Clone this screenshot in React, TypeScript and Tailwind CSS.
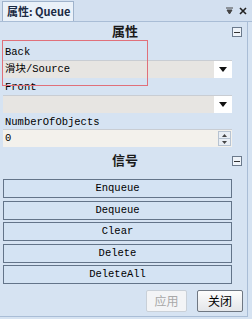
import React from 'react'

const mono = { fontFamily: '"Liberation Mono", "Noto Sans CJK SC", monospace' }
const cjk = { fontFamily: '"Noto Sans CJK SC", sans-serif' }

function SectionHeader({ title }: { title: string }) {
  return (
    <div className="relative flex h-[17px] items-center justify-center">
      <span className="text-[13px] font-bold leading-none text-[#1a1a1a]" style={cjk}>
        {title}
      </span>
      <span className="absolute right-[5px] top-[5px] flex h-[10px] w-[10px] items-center justify-center border border-[#6b7a8c] bg-[#eef3f9]">
        <span className="h-px w-[6px] bg-[#333]" />
      </span>
    </div>
  )
}

function Label({ text }: { text: string }) {
  return (
    <div className="mt-[2px] h-[14px] pl-[2px] text-[10.5px] leading-[14px] text-black" style={mono}>
      {text}
    </div>
  )
}

function Combo({ value }: { value?: string }) {
  return (
    <div className="flex h-[18px] w-[229px] border-t border-[#c9cdd3] bg-[#e7e5e2]">
      <div className="flex flex-1 items-center px-[2px] text-[10.5px] leading-none text-black" style={mono}>
        {value}
      </div>
      <div className="flex w-[18px] items-center justify-center bg-white">
        <svg width="8" height="5" viewBox="0 0 8 5"><path d="M0 0h8L4 5z" fill="#111" /></svg>
      </div>
    </div>
  )
}

function ActionButton({ label }: { label: string }) {
  return (
    <button
      className="flex h-[19px] w-[229px] items-center justify-center border border-[#637489] bg-[#d4e3f3] text-[10.5px] leading-none text-black"
      style={mono}
    >
      {label}
    </button>
  )
}

export default function App() {
  return (
    <div className="h-[319px] w-[252px] overflow-hidden bg-[#d6e3f2]">
      {/* tab strip */}
      <div className="flex h-[22px] items-end border-b border-[#a9bdd6] bg-[#d3e0f0]">
        <div
          className="ml-[2px] flex h-[20px] w-[72px] items-center border border-b-0 border-[#9fb3cc] bg-[#eaf1f9] pl-[4px] text-[11px] font-bold text-[#1b2a44]"
          style={cjk}
        >
          属性: Queue
        </div>
        <div className="flex-1" />
        <div className="mb-[6px] mr-[5px] flex items-center gap-[6px]">
          <svg width="7" height="8" viewBox="0 0 7 8"><path d="M0 1h7M1 3h5L3.5 7z" stroke="#444" strokeWidth="1" fill="#444" /></svg>
          <svg width="8" height="8" viewBox="0 0 8 8"><path d="M1 1l6 6M7 1L1 7" stroke="#222" strokeWidth="1.6" /></svg>
        </div>
      </div>

      <div className="mr-[4px] flex h-[295px] flex-col border-r border-b border-[#a9bdd6] pl-[3px]">
        <SectionHeader title="属性" />

        <div className="relative mt-[1px] flex flex-col pt-[3px]">
          <div className="pointer-events-none absolute -left-[1px] top-0 h-[46px] w-[146px] border border-[#e0707a]" />
          <Label text="Back" />
          <div className="mt-[1px]">
            <Combo value="滑块/Source" />
          </div>
          <Label text="Front" />
          <div className="mt-[1px]">
            <Combo />
          </div>
          <Label text="NumberOfObjects" />
          <div className="flex h-[18px] w-[229px] border-t border-[#c9cdd3] bg-[#f3f1ec]">
            <div className="flex flex-1 items-center px-[2px] text-[10.5px] leading-none text-black" style={mono}>0</div>
            <div className="my-[1px] mr-[1px] flex w-[13px] flex-col border border-[#b7c3d1] bg-[#e9eef4]">
              <div className="flex flex-1 items-center justify-center border-b border-[#b7c3d1]">
                <svg width="5" height="3" viewBox="0 0 5 3"><path d="M0 3h5L2.5 0z" fill="#444" /></svg>
              </div>
              <div className="flex flex-1 items-center justify-center">
                <svg width="5" height="3" viewBox="0 0 5 3"><path d="M0 0h5L2.5 3z" fill="#444" /></svg>
              </div>
            </div>
          </div>
        </div>

        <div className="mt-[4px]">
          <SectionHeader title="信号" />
        </div>

        <div className="mt-[11px] flex flex-col gap-[2.5px]">
          <ActionButton label="Enqueue" />
          <ActionButton label="Dequeue" />
          <ActionButton label="Clear" />
          <ActionButton label="Delete" />
          <ActionButton label="DeleteAll" />
        </div>

        <div className="mt-[6px] flex justify-end gap-[10px] pr-[4px]">
          <button
            className="h-[22px] w-[41px] rounded-[2px] border border-[#c9d0d8] bg-[#f3f4f6] text-[12px] text-[#a8a8a8]"
            style={cjk}
          >
            应用
          </button>
          <button
            className="h-[22px] w-[46px] rounded-[2px] border border-[#6f7782] bg-gradient-to-b from-[#fdfdfd] to-[#e4e6e9] text-[12px] text-black"
            style={cjk}
          >
            关闭
          </button>
        </div>
      </div>
    </div>
  )
}
